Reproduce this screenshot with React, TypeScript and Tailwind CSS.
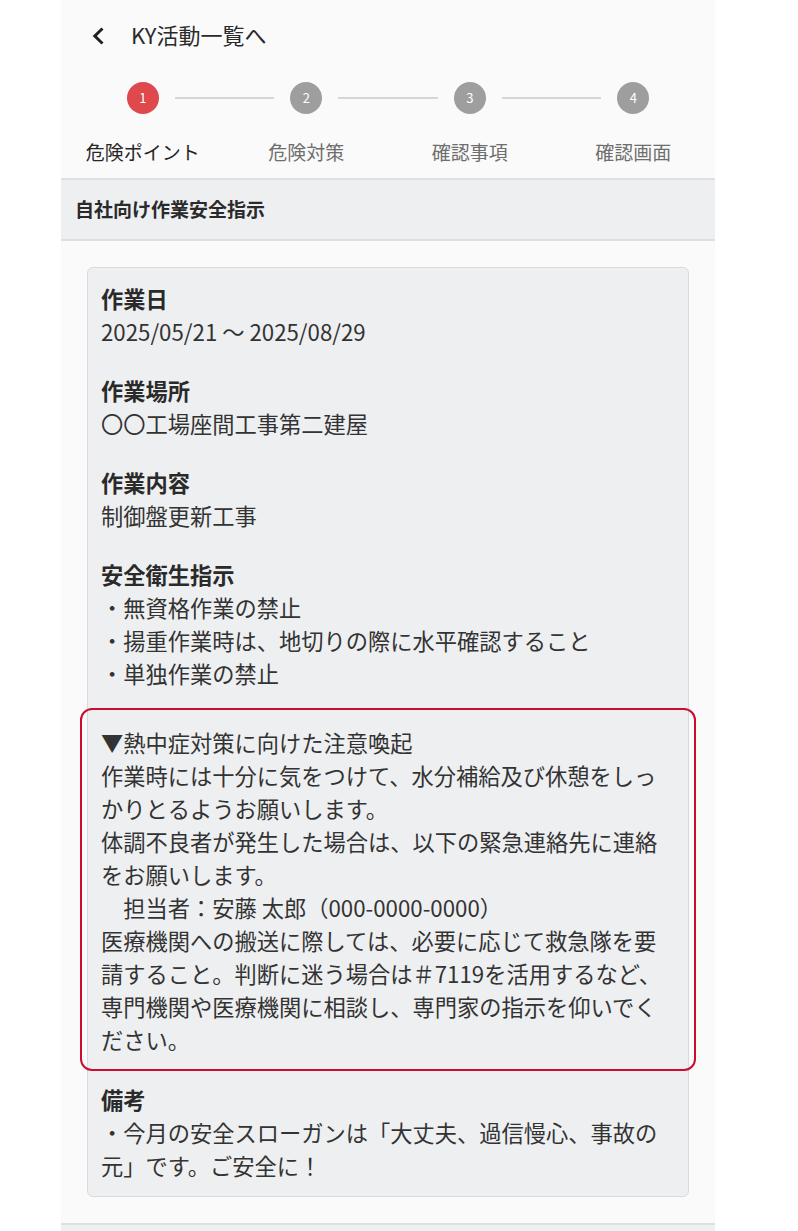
const steps = [
  { n: 1, label: "危険ポイント" },
  { n: 2, label: "危険対策" },
  { n: 3, label: "確認事項" },
  { n: 4, label: "確認画面" },
];

const sections = [
  { title: "作業日", lines: ["2025/05/21 ～ 2025/08/29"] },
  { title: "作業場所", lines: ["〇〇工場座間工事第二建屋"] },
  { title: "作業内容", lines: ["制御盤更新工事"] },
  {
    title: "安全衛生指示",
    lines: [
      "・無資格作業の禁止",
      "・揚重作業時は、地切りの際に水平確認すること",
      "・単独作業の禁止",
    ],
  },
];

const notice = [
  "▼熱中症対策に向けた注意喚起",
  "作業時には十分に気をつけて、水分補給及び休憩をしっかりとるようお願いします。",
  "体調不良者が発生した場合は、以下の緊急連絡先に連絡をお願いします。",
  "　担当者：安藤 太郎（000-0000-0000）",
  "医療機関への搬送に際しては、必要に応じて救急隊を要請すること。判断に迷う場合は＃7119を活用するなど、専門機関や医療機関に相談し、専門家の指示を仰いでください。",
];

function Stepper() {
  return (
    <div className="pt-[14px] pb-3">
      <div className="flex items-center px-[65.75px]">
        {steps.map((s, i) => (
          <div key={s.n} className={i < steps.length - 1 ? "flex flex-1 items-center" : "flex items-center"}>
            <span
              className={`flex h-8 w-8 shrink-0 items-center justify-center rounded-full text-[13px] text-white ${
                s.n === 1 ? "bg-[#df484c]" : "bg-[#9e9e9e]"
              }`}
            >
              {s.n}
            </span>
            {i < steps.length - 1 && <span className="mx-4 h-[2px] flex-1 bg-[#d6d6d6]" />}
          </div>
        ))}
      </div>
      <div className="mt-[24px] grid grid-cols-4 text-center text-[19px] leading-7">
        {steps.map((s) => (
          <span key={s.n} className={s.n === 1 ? "text-[#262626]" : "text-[#6e6e6e]"}>
            {s.label}
          </span>
        ))}
      </div>
    </div>
  );
}

export default function App() {
  return (
    <div className="min-h-[1231px] bg-white font-['Noto_Sans_CJK_JP','Noto_Sans',sans-serif] text-[#333]">
      <div className="ml-[61px] flex min-h-[1231px] w-[654px] flex-col bg-[#fafafa]">
        {/* header */}
        <div className="flex h-[68px] items-center pl-[30px]">
          <svg width="14" height="20" viewBox="0 0 14 20" className="mt-[3px] text-[#222]" aria-hidden>
            <path d="M11.5 2.5 L3.8 10 L11.5 17.5" fill="none" stroke="currentColor" strokeWidth="3" />
          </svg>
          <span className="ml-[26px] text-[22px] leading-8 text-[#2a2a2a]">KY活動一覧へ</span>
        </div>

        <Stepper />

        <div className="flex h-[63px] items-center border-y-2 border-[#dedfe1] bg-[#eeeff1] px-[14px]">
          <span className="text-[19px] font-bold text-[#2a2a2a]">自社向け作業安全指示</span>
        </div>

        <div className="px-[26px] pt-[26px] pb-[26px]">
          <div className="rounded-md border border-[#d9dadc] bg-[#eeeff1] px-[13px] pt-[14px] pb-[14px] text-[22.25px] leading-[33px]">
            {sections.map((s, i) => (
              <div key={s.title} className={i < sections.length - 1 ? "mb-[26px]" : ""}>
                <p className="font-bold text-[#2a2a2a]">{s.title}</p>
                {s.lines.map((l) => (
                  <p key={l}>{l}</p>
                ))}
              </div>
            ))}

            {/* heat-stroke notice, red-framed and bleeding past the card padding */}
            <div className="-mx-[21px] mt-[18px] rounded-xl border-2 border-[#cc0c2f] pt-[16px] pr-[28px] pb-[13px] pl-[19px]">
              {notice.map((l) => (
                <p key={l} className="whitespace-pre-wrap">
                  {l}
                </p>
              ))}
            </div>

            <div className="mt-[12px]">
              <p className="font-bold text-[#2a2a2a]">備考</p>
              <p>・今月の安全スローガンは「大丈夫、過信慢心、事故の元」です。ご安全に！</p>
            </div>
          </div>
        </div>

        <div className="flex-1 border-t-2 border-[#dedfe1] bg-[#eeeff1]" />
      </div>
    </div>
  );
}
